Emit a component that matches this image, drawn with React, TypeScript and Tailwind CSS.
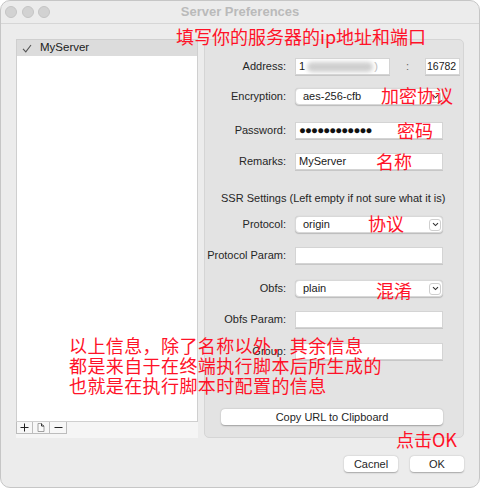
import React from "react";

const red = "text-[#ff1228]";
const cjk = "font-['Noto_Sans_CJK_SC',sans-serif]";

function Label({ text }: { text: string }) {
  return <div className="w-[82px] shrink-0 text-right text-[11px] text-[#262626] leading-none pr-[1px]">{text}</div>;
}

function TextInput({ value, w = "w-[148px]", px = "px-[3px]" }: { value?: React.ReactNode; w?: string; px?: string }) {
  return (
    <div className={`${w} h-[17px] bg-white border border-[#d4d4d4] shadow-[0_0.5px_0.5px_rgba(0,0,0,0.12)] flex items-center ${px} text-[11px] text-[#1a1a1a] leading-none overflow-hidden whitespace-nowrap`}>
      {value}
    </div>
  );
}

function Chevron() {
  return (
    <div className="w-[12px] h-[12px] bg-white border border-[#cfcfcf] rounded-[3px] flex items-center justify-center">
      <svg width="7" height="5" viewBox="0 0 7 5">
        <path d="M1 1.2 L3.5 3.6 L6 1.2" fill="none" stroke="#333" strokeWidth="1.1" />
      </svg>
    </div>
  );
}

function Popup({ value }: { value: string }) {
  return (
    <div className="w-[148px] h-[17px] bg-white rounded-[4px] border border-[#d8d8d8] shadow-[0_0.5px_1px_rgba(0,0,0,0.18)] flex items-center justify-between pl-[7px] pr-[1px] text-[11px] text-[#1a1a1a] leading-none">
      <span>{value}</span>
      <Chevron />
    </div>
  );
}

function Row({ label, children, mt }: { label: string; children: React.ReactNode; mt: string }) {
  return (
    <div className={`flex items-center gap-[8px] ${mt}`}>
      <Label text={label} />
      {children}
    </div>
  );
}

function MacButton({ text, w }: { text: string; w: string }) {
  return (
    <div className={`${w} h-[16px] bg-white rounded-[4px] shadow-[0_0.5px_1.5px_rgba(0,0,0,0.3)] flex items-center justify-center text-[11px] text-[#1f1f1f] leading-none`}>
      {text}
    </div>
  );
}

export default function App() {
  return (
    <div className="relative w-[480px] h-[488px] bg-white font-['Liberation_Sans',sans-serif]">
      <div className="h-full rounded-[10px] bg-[#ececec] border border-[#c6c6c6] overflow-hidden flex flex-col">
        {/* title bar */}
        <div className="relative h-[23px] shrink-0 border-b border-[#d6d6d6] flex items-center pl-[4px]">
          <div className="flex gap-[4.5px]">
            <div className="w-[12px] h-[12px] rounded-full bg-[#d2d2d2] border border-[#c4c4c4]" />
            <div className="w-[12px] h-[12px] rounded-full bg-[#d2d2d2] border border-[#c4c4c4]" />
            <div className="w-[12px] h-[12px] rounded-full bg-[#d2d2d2] border border-[#c4c4c4]" />
          </div>
          <div className="absolute inset-0 flex items-center justify-center text-[13px] font-bold text-[#bababa]">
            Server Preferences
          </div>
        </div>

        {/* body */}
        <div className="flex gap-[6px] pl-[15px] pt-[15px]">
          {/* server list */}
          <div className="w-[182px] flex flex-col">
            <div className="h-[383px] bg-white border border-[#cfcfcf] flex flex-col">
              <div className="h-[16px] bg-[#dcdcdc] flex items-center pl-[5px] gap-[8px] text-[11.5px] text-[#1a1a1a] leading-none">
                <svg width="10" height="9" viewBox="0 0 10 9">
                  <path d="M1 4.8 L3.8 7.8 L9 1" fill="none" stroke="#555" strokeWidth="1.1" />
                </svg>
                <span>MyServer</span>
              </div>
            </div>
            <div className="h-[16px] bg-[#f5f5f5] flex items-start">
              <div className="flex border border-t-0 border-[#bdbdbd] h-[12px] bg-[#f7f7f7]">
                <div className="w-[16px] flex items-center justify-center border-r border-[#bdbdbd]">
                  <svg width="9" height="9" viewBox="0 0 9 9">
                    <path d="M4.5 0.5 V8.5 M0.5 4.5 H8.5" stroke="#222" strokeWidth="1" />
                  </svg>
                </div>
                <div className="w-[17px] flex items-center justify-center border-r border-[#bdbdbd]">
                  <svg width="8" height="9" viewBox="0 0 8 9">
                    <path d="M1 8.5 V0.5 H4.5 L7 3 V8.5 Z" fill="#fafafa" stroke="#8a8a8a" strokeWidth="0.8" />
                    <path d="M4.5 0.5 V3 H7" fill="none" stroke="#333" strokeWidth="1" />
                  </svg>
                </div>
                <div className="w-[16px] flex items-center justify-center">
                  <svg width="9" height="9" viewBox="0 0 9 9">
                    <path d="M0.5 4.5 H8.5" stroke="#222" strokeWidth="1" />
                  </svg>
                </div>
              </div>
            </div>
          </div>

          {/* settings panel */}
          <div className="w-[260px] h-[399px] bg-[#e3e3e3] border border-[#d5d5d5] rounded-[5px] flex flex-col">
            <Row label="Address:" mt="mt-[18px]">
              <TextInput
                w="w-[95px]"
                value={
                  <span className="flex items-center">
                    <span>1</span>
                    <span className="ml-[2px] w-[66px] h-[10px] rounded-full bg-[#cfcfcf] blur-[2px]" />
                    <span className="ml-[1px] text-[#bdbdbd]">)</span>
                  </span>
                }
              />
              <span className="w-[19px] text-center text-[11px] text-[#666] leading-none">:</span>
              <TextInput w="w-[35px]" px="px-[1px]" value={<span className="text-[10.5px]">16782</span>} />
            </Row>
            <Row label="Encryption:" mt="mt-[13px]">
              <Popup value="aes-256-cfb" />
            </Row>
            <Row label="Password:" mt="mt-[17px]">
              <TextInput value={<span className="text-[11.5px] tracking-[-0.9px] text-[#111]">●●●●●●●●●●●●</span>} />
            </Row>
            <Row label="Remarks:" mt="mt-[14px]">
              <TextInput value="MyServer" />
            </Row>
            <div className="mt-[21px] h-[14px] pl-[16px] text-[11px] text-[#262626] leading-[14px]">
              SSR Settings (Left empty if not sure what it is)
            </div>
            <Row label="Protocol:" mt="mt-[11px]">
              <Popup value="origin" />
            </Row>
            <Row label="Protocol Param:" mt="mt-[14px]">
              <TextInput />
            </Row>
            <Row label="Obfs:" mt="mt-[16px]">
              <Popup value="plain" />
            </Row>
            <Row label="Obfs Param:" mt="mt-[14px]">
              <TextInput />
            </Row>
            <Row label="Group:" mt="mt-[15px]">
              <TextInput />
            </Row>
            <div className="mt-[49px] pl-[16px]">
              <MacButton text="Copy URL to Clipboard" w="w-[222px]" />
            </div>
          </div>
        </div>

        {/* dialog buttons */}
        <div className="flex justify-end gap-[12px] pr-[15px] mt-[18px]">
          <MacButton text="Cacnel" w="w-[54px]" />
          <MacButton text="OK" w="w-[54px]" />
        </div>
      </div>

      {/* red annotations */}
      <div className={`absolute left-[176px] top-[27px] text-[18px] leading-none ${red} ${cjk}`}>填写你的服务器的ip地址和端口</div>
      <div className={`absolute left-[381px] top-[86px] text-[18px] leading-none ${red} ${cjk}`}>加密协议</div>
      <div className={`absolute left-[397px] top-[121px] text-[18px] leading-none ${red} ${cjk}`}>密码</div>
      <div className={`absolute left-[376px] top-[152px] text-[18px] leading-none ${red} ${cjk}`}>名称</div>
      <div className={`absolute left-[368px] top-[214px] text-[18px] leading-none ${red} ${cjk}`}>协议</div>
      <div className={`absolute left-[376px] top-[281px] text-[18px] leading-none ${red} ${cjk}`}>混淆</div>
      <div className={`absolute left-[69px] top-[335px] text-[18px] leading-[20px] tracking-[0.4px] ${red} ${cjk}`}>
        <div>以上信息，除了名称以外，其余信息</div>
        <div>都是来自于在终端执行脚本后所生成的</div>
        <div>也就是在执行脚本时配置的信息</div>
      </div>
      <div className={`absolute left-[396px] top-[430px] text-[18px] leading-none ${red} ${cjk}`}>点击OK</div>
    </div>
  );
}
